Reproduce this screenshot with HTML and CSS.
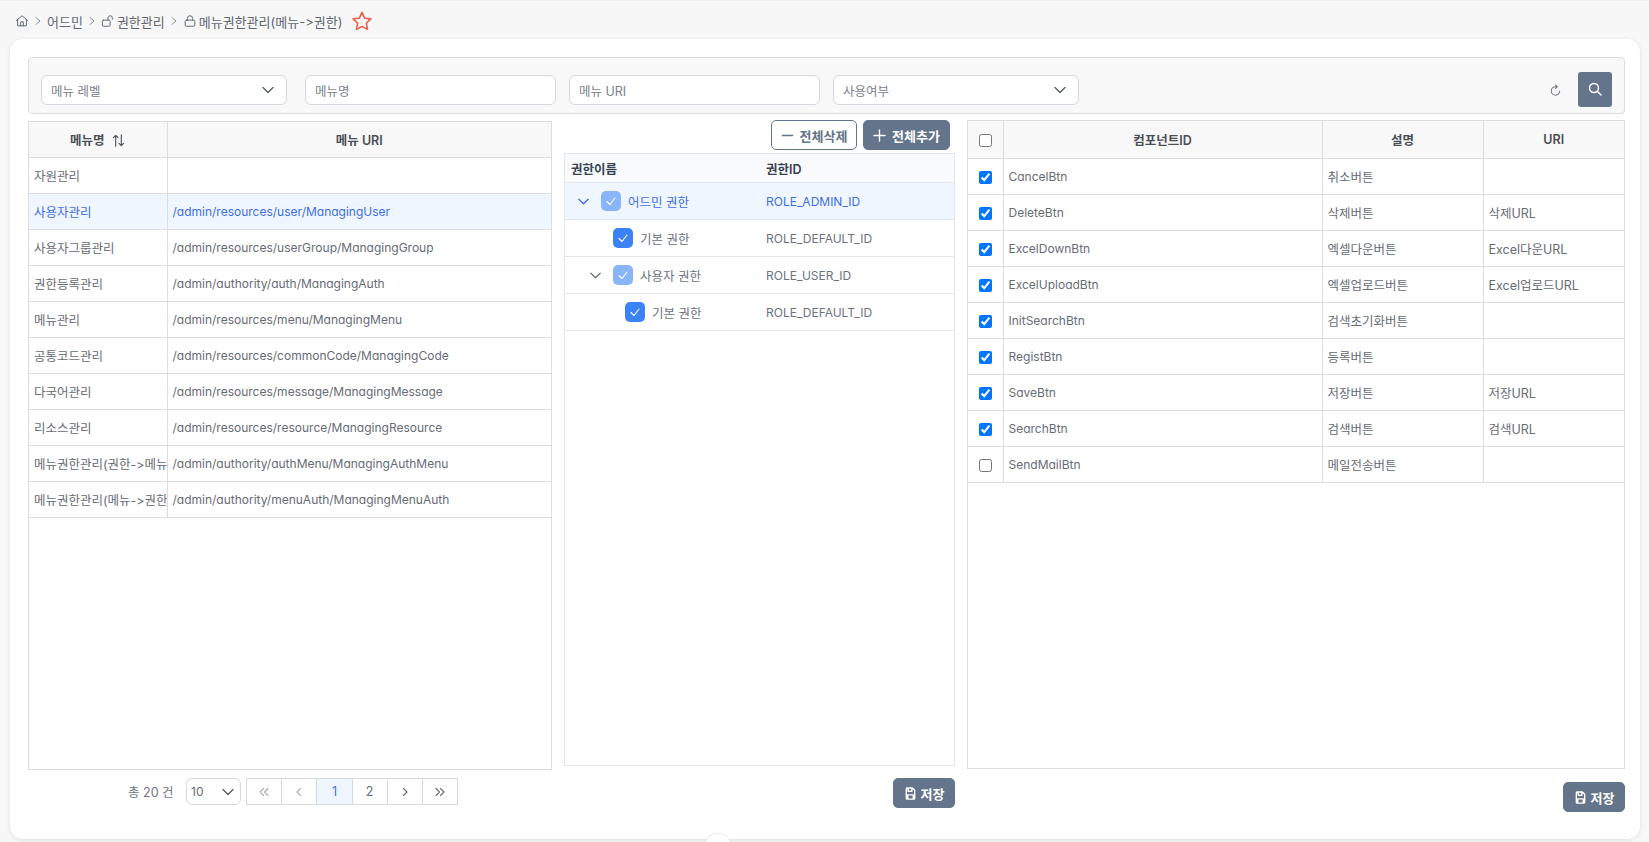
FILE: index.html
```html
<!DOCTYPE html>
<html lang="ko">
<head>
    <meta charset="UTF-8">
    <meta name="viewport" content="width=device-width, initial-scale=1.0">
    <title>메뉴권한관리(메뉴->권한)</title>
    <link rel="stylesheet" href="styles.css">
</head>
<body>
    <nav class="breadcrumb">
        <svg class="crumb-icon" viewBox="0 0 16 16"><path d="M1.5 7.5 8 2l6.5 5.5M3 6.5V13.5h10V6.5M6.5 13.5V9h3v4.5"/></svg>
        <svg class="crumb-sep" viewBox="0 0 10 10"><path d="M3 1.5 7 5 3 8.5"/></svg>
        <span>어드민</span>
        <svg class="crumb-sep" viewBox="0 0 10 10"><path d="M3 1.5 7 5 3 8.5"/></svg>
        <svg class="crumb-icon tight" viewBox="0 0 16 16"><rect x="1.5" y="7" width="9" height="7" rx="1.5"/><path d="M8 7V4.5a2.5 2.5 0 0 1 5 0V6"/></svg>
        <span>권한관리</span>
        <svg class="crumb-sep" viewBox="0 0 10 10"><path d="M3 1.5 7 5 3 8.5"/></svg>
        <svg class="crumb-icon tight lock" viewBox="0 0 16 16"><rect x="2.5" y="7" width="11" height="7" rx="1.5"/><path d="M5 7V5a3 3 0 0 1 6 0v2"/></svg>
        <span>메뉴권한관리(메뉴-&gt;권한)</span>
        <svg class="star" viewBox="0 0 24 24"><path d="M12 2.6 14.9 8.9 21.7 9.7 16.7 14.4 18 21.2 12 17.8 6 21.2 7.3 14.4 2.3 9.7 9.1 8.9Z"/></svg>
    </nav>

    <main class="card">
        <div class="search-bar">
            <div class="field select w-select first"><span>메뉴 레벨</span><svg class="chev" viewBox="0 0 14 14"><path d="M2 4.5 7 9.5l5-5"/></svg></div>
            <div class="field w-input"><span>메뉴명</span></div>
            <div class="field w-input"><span>메뉴 URI</span></div>
            <div class="field select w-select"><span>사용여부</span><svg class="chev" viewBox="0 0 14 14"><path d="M2 4.5 7 9.5l5-5"/></svg></div>
            <svg class="refresh" viewBox="0 0 16 16"><path d="M12.5 8.5A4.5 4.5 0 1 1 8 4h1.5M8 2l2 2-2 1.8"/></svg>
            <button class="search-btn"><svg viewBox="0 0 16 16"><circle cx="7" cy="7" r="4.5"/><path d="m10.5 10.5 3.5 3.5"/></svg></button>
        </div>

        <div class="columns">
            <section class="col-left">
                <div class="table-box left-box">
                    <table class="grid">
                        <colgroup><col class="c-name"><col></colgroup>
                        <thead>
                            <tr><th>메뉴명 <svg class="sort" viewBox="0 0 16 16"><path d="M5 14V2.5M2.5 5 5 2.5 7.5 5M11 2v11.5M8.5 11 11 13.5 13.5 11"/></svg></th><th>메뉴 URI</th></tr>
                        </thead>
                        <tbody>
                            <tr><td>자원관리</td><td></td></tr>
                            <tr class="selected"><td>사용자관리</td><td class="latin">/admin/resources/user/ManagingUser</td></tr>
                            <tr><td>사용자그룹관리</td><td class="latin">/admin/resources/userGroup/ManagingGroup</td></tr>
                            <tr><td>권한등록관리</td><td class="latin">/admin/authority/auth/ManagingAuth</td></tr>
                            <tr><td>메뉴관리</td><td class="latin">/admin/resources/menu/ManagingMenu</td></tr>
                            <tr><td>공통코드관리</td><td class="latin">/admin/resources/commonCode/ManagingCode</td></tr>
                            <tr><td>다국어관리</td><td class="latin">/admin/resources/message/ManagingMessage</td></tr>
                            <tr><td>리소스관리</td><td class="latin">/admin/resources/resource/ManagingResource</td></tr>
                            <tr><td>메뉴권한관리(권한-&gt;메뉴)</td><td class="latin">/admin/authority/authMenu/ManagingAuthMenu</td></tr>
                            <tr><td>메뉴권한관리(메뉴-&gt;권한)</td><td class="latin">/admin/authority/menuAuth/ManagingMenuAuth</td></tr>
                        </tbody>
                    </table>
                </div>
                <div class="pager-row">
                    <span class="total">총 20 건</span>
                    <div class="page-size"><span>10</span><svg class="chev" viewBox="0 0 14 14"><path d="M2 4.5 7 9.5l5-5"/></svg></div>
                    <div class="pager">
                        <span class="off"><svg viewBox="0 0 12 12"><path d="M5.5 2.5 2 6l3.5 3.5M10 2.5 6.5 6l3.5 3.5"/></svg></span>
                        <span class="off"><svg viewBox="0 0 12 12"><path d="M7.5 2.5 4 6l3.5 3.5"/></svg></span>
                        <span class="current">1</span>
                        <span>2</span>
                        <span><svg viewBox="0 0 12 12"><path d="M4.5 2.5 8 6 4.5 9.5"/></svg></span>
                        <span><svg viewBox="0 0 12 12"><path d="M2 2.5 5.5 6 2 9.5M6.5 2.5 10 6l-3.5 3.5"/></svg></span>
                    </div>
                </div>
            </section>

            <section class="col-mid">
                <div class="mid-actions">
                    <button class="btn btn-outline"><svg viewBox="0 0 14 14"><path d="M1.5 7h11"/></svg>전체삭제</button>
                    <button class="btn btn-solid"><svg viewBox="0 0 14 14"><path d="M1 7h12M7 1v12"/></svg>전체추가</button>
                </div>
                <div class="tree">
                    <div class="tree-head"><div class="t-name">권한이름</div><div>권한ID</div></div>
                    <div class="tree-row selected">
                        <div class="t-name lvl-0">
                            <svg class="tree-chev" viewBox="0 0 14 14"><path d="M2 4.5 7 9.5l5-5"/></svg>
                            <span class="tick partial"><svg viewBox="0 0 14 14"><path d="M3 7.5 6 10.5 11 4"/></svg></span>어드민 권한
                        </div>
                        <div class="latin">ROLE_ADMIN_ID</div>
                    </div>
                    <div class="tree-row">
                        <div class="t-name lvl-1">
                            <span class="tick"><svg viewBox="0 0 14 14"><path d="M3 7.5 6 10.5 11 4"/></svg></span>기본 권한
                        </div>
                        <div class="latin">ROLE_DEFAULT_ID</div>
                    </div>
                    <div class="tree-row">
                        <div class="t-name lvl-1b">
                            <svg class="tree-chev" viewBox="0 0 14 14"><path d="M2 4.5 7 9.5l5-5"/></svg>
                            <span class="tick partial"><svg viewBox="0 0 14 14"><path d="M3 7.5 6 10.5 11 4"/></svg></span>사용자 권한
                        </div>
                        <div class="latin">ROLE_USER_ID</div>
                    </div>
                    <div class="tree-row">
                        <div class="t-name lvl-2">
                            <span class="tick"><svg viewBox="0 0 14 14"><path d="M3 7.5 6 10.5 11 4"/></svg></span>기본 권한
                        </div>
                        <div class="latin">ROLE_DEFAULT_ID</div>
                    </div>
                </div>
                <div class="save-row mid-save">
                    <button class="btn btn-solid btn-save"><svg viewBox="0 0 14 14"><path d="M3 1h6l2.5 2.5V12a1 1 0 0 1-1 1h-7a1 1 0 0 1-1-1V2a1 1 0 0 1 1-1ZM4.5 1v3.5h4V1M4 13V8.5h6V13"/></svg>저장</button>
                </div>
            </section>

            <section class="col-right">
                <div class="table-box right-box">
                    <table class="grid">
                        <colgroup><col class="c-check"><col><col class="c-desc"><col class="c-uri"></colgroup>
                        <thead>
                            <tr class="tall"><th><input type="checkbox"></th><th>컴포넌트ID</th><th>설명</th><th>URI</th></tr>
                        </thead>
                        <tbody>
                            <tr><td class="check"><input type="checkbox" checked></td><td class="latin">CancelBtn</td><td>취소버튼</td><td></td></tr>
                            <tr><td class="check"><input type="checkbox" checked></td><td class="latin">DeleteBtn</td><td>삭제버튼</td><td>삭제URL</td></tr>
                            <tr><td class="check"><input type="checkbox" checked></td><td class="latin">ExcelDownBtn</td><td>엑셀다운버튼</td><td>Excel다운URL</td></tr>
                            <tr><td class="check"><input type="checkbox" checked></td><td class="latin">ExcelUploadBtn</td><td>엑셀업로드버튼</td><td>Excel업로드URL</td></tr>
                            <tr><td class="check"><input type="checkbox" checked></td><td class="latin">InitSearchBtn</td><td>검색초기화버튼</td><td></td></tr>
                            <tr><td class="check"><input type="checkbox" checked></td><td class="latin">RegistBtn</td><td>등록버튼</td><td></td></tr>
                            <tr><td class="check"><input type="checkbox" checked></td><td class="latin">SaveBtn</td><td>저장버튼</td><td>저장URL</td></tr>
                            <tr><td class="check"><input type="checkbox" checked></td><td class="latin">SearchBtn</td><td>검색버튼</td><td>검색URL</td></tr>
                            <tr><td class="check"><input type="checkbox"></td><td class="latin">SendMailBtn</td><td>메일전송버튼</td><td></td></tr>
                        </tbody>
                    </table>
                </div>
                <div class="save-row right-save">
                    <button class="btn btn-solid btn-save"><svg viewBox="0 0 14 14"><path d="M3 1h6l2.5 2.5V12a1 1 0 0 1-1 1h-7a1 1 0 0 1-1-1V2a1 1 0 0 1 1-1ZM4.5 1v3.5h4V1M4 13V8.5h6V13"/></svg>저장</button>
                </div>
            </section>
        </div>
        <div class="collapse-tab"></div>
    </main>
</body>
</html>
```

FILE: styles.css
```css
* {
    box-sizing: border-box;
}
html, body {
    height: 100%;
}
body {
    margin: 0;
    background-color: #f7f7f7;
    color: #666c76;
    font-family: Inter, "Noto Sans CJK KR", sans-serif;
    font-size: 12.5px;
    overflow: hidden;
}
svg {
    fill: none;
    stroke: currentColor;
    stroke-linecap: round;
    stroke-linejoin: round;
}
.latin {
    font-size: 12px;
}

/* breadcrumb */
.breadcrumb {
    height: 39px;
    padding: 2px 0 0 15px;
    display: flex;
    align-items: center;
    color: #5f6672;
    font-size: 13px;
    border-top: 1px solid #eeeeee;
}
.crumb-icon {
    width: 14px;
    height: 14px;
    stroke-width: 1.1;
}
.crumb-icon.tight {
    margin-right: 2px;
}
.crumb-sep {
    width: 10px;
    height: 10px;
    margin: 0 4px;
    color: #8a8f98;
    stroke-width: 1;
}
.star {
    width: 22px;
    height: 22px;
    margin-left: 9px;
    color: #ef5b43;
    stroke-width: 1.7;
}

/* card */
.card {
    position: relative;
    height: 800px;
    margin: 0 9px 0 10px;
    padding: 18px 15px 0 18px;
    background-color: #fff;
    border-radius: 13px;
    box-shadow: 0 1px 4px rgba(0, 0, 0, 0.1);
}
.search-bar {
    height: 57px;
    display: flex;
    align-items: center;
    padding: 9px 12px 0;
    background-color: #f8f8f8;
    border: 1px solid #dddddd;
    border-radius: 4px;
}
.field {
    height: 30px;
    margin-right: 13px;
    padding: 0 9px;
    display: flex;
    align-items: center;
    justify-content: space-between;
    background-color: #fff;
    border: 1px solid #d5d8de;
    border-radius: 6px;
    color: #7b818b;
}
.w-select {
    width: 246px;
}
.w-select.first {
    margin-right: 18px;
}
.w-input {
    width: 251px;
}
.w-input + .w-select {
    margin-right: auto;
}
.chev {
    width: 14px;
    height: 14px;
    margin-right: 2px;
    color: #555b66;
    stroke-width: 1.3;
}
.refresh {
    width: 15px;
    height: 15px;
    color: #70767f;
    stroke-width: 1.1;
    margin-right: 15px;
}
.search-btn {
    width: 34px;
    height: 35px;
    margin-top: -2px;
    padding: 0;
    border: none;
    border-radius: 3px;
    background-color: #64748b;
    color: #fff;
    display: flex;
    align-items: center;
    justify-content: center;
}
.search-btn svg {
    width: 16px;
    height: 16px;
    stroke-width: 1.5;
}

/* three columns */
.columns {
    display: flex;
}
.col-left {
    width: 524px;
    margin-top: 7px;
}
.col-mid {
    width: 391px;
    margin-left: 12px;
    margin-top: 6px;
}
.col-right {
    width: 658px;
    margin-left: 12px;
    margin-top: 6px;
}
.table-box {
    border: 1px solid #dddddd;
}
.left-box {
    height: 649px;
}
.right-box {
    height: 649px;
}
.grid {
    width: 100%;
    border-collapse: collapse;
    table-layout: fixed;
    font-feature-settings: "cv11";
}
.grid th,
.grid td {
    height: 36px;
    padding: 0 5px;
    border: 1px solid #dddddd;
    white-space: nowrap;
    overflow: hidden;
}
.grid tr > :first-child {
    border-left: none;
}
.grid tr > :last-child {
    border-right: none;
}
.grid thead tr > * {
    border-top: none;
    height: 35px;
}
.grid th {
    background-color: #f8f8f8;
    color: #4a4f57;
    font-weight: 600;
    text-align: center;
}
.grid .tall th {
    height: 37px;
}
.grid tr.selected td {
    background-color: #eff6ff;
    color: #3f6fe0;
}
.c-name {
    width: 138px;
}
.c-check {
    width: 35px;
}
.c-desc {
    width: 161px;
}
.c-uri {
    width: 141px;
}
.check {
    text-align: center;
}
.grid input {
    width: 13px;
    height: 13px;
    margin: 0;
    vertical-align: middle;
    accent-color: #0075ff;
}
.sort {
    width: 15px;
    height: 15px;
    margin-left: 3px;
    vertical-align: -3px;
    stroke-width: 1.2;
}

/* pager */
.pager-row {
    display: flex;
    align-items: center;
    margin-top: 8px;
    padding-left: 100px;
}
.total {
    width: 58px;
    color: #70767f;
}
.page-size {
    width: 55px;
    height: 27px;
    margin-right: 6px;
    padding: 0 3px 0 4px;
    display: flex;
    align-items: center;
    justify-content: space-between;
    border: 1px solid #d5d8de;
    border-radius: 6px;
    font-size: 12px;
}
.pager {
    display: flex;
}
.pager span {
    width: 36.2px;
    height: 27px;
    margin-left: -1px;
    display: flex;
    align-items: center;
    justify-content: center;
    border: 1px solid #d5d8de;
}
.pager svg {
    width: 12px;
    height: 12px;
    stroke-width: 1.1;
}
.pager .off {
    color: #a8adb5;
}
.pager .current {
    background-color: #eff6ff;
    color: #3f6fe0;
}

/* tree */
.mid-actions {
    height: 33px;
    display: flex;
    justify-content: flex-end;
    gap: 6px;
    padding-right: 5px;
}
.btn {
    height: 30px;
    padding: 0;
    display: inline-flex;
    align-items: center;
    justify-content: center;
    gap: 6px;
    border-radius: 5px;
    font-family: inherit;
    font-size: 13px;
    font-weight: 700;
}
.btn svg {
    width: 13px;
    height: 13px;
    stroke-width: 1.5;
}
.btn-outline {
    width: 86px;
    background-color: #fff;
    border: 1px solid #64748b;
    color: #64748b;
}
.btn-solid {
    width: 87px;
    background-color: #64748b;
    border: 1px solid #64748b;
    color: #fff;
}
.tree {
    height: 613px;
    border: 1px solid #e2e5ea;
}
.tree-head,
.tree-row {
    display: flex;
    align-items: center;
    border-bottom: 1px solid #e2e5ea;
}
.tree-head {
    height: 29px;
    background-color: #f8fafc;
    color: #374151;
    font-weight: 600;
}
.tree-row {
    height: 37px;
    color: #6b7280;
}
.tree-row.selected {
    background-color: #eff6ff;
    color: #3f6fe0;
}
.t-name {
    width: 201px;
    padding-left: 6px;
    display: flex;
    align-items: center;
    flex-shrink: 0;
}
.lvl-0 {
    padding-left: 12px;
}
.lvl-1 {
    padding-left: 48px;
}
.lvl-1b {
    padding-left: 24px;
}
.lvl-2 {
    padding-left: 60px;
}
.tree-chev {
    width: 13px;
    height: 13px;
    margin-right: 11px;
    stroke-width: 1.4;
}
.tick {
    width: 20px;
    height: 20px;
    margin-right: 7px;
    display: flex;
    align-items: center;
    justify-content: center;
    border-radius: 5px;
    background-color: #3b82f6;
    color: #fff;
}
.tick.partial {
    background-color: #89b5fb;
}
.tick svg {
    width: 14px;
    height: 14px;
    stroke-width: 1.1;
}
.save-row {
    display: flex;
    justify-content: flex-end;
}
.mid-save {
    margin-top: 12px;
}
.right-save {
    margin-top: 13px;
}
.btn-save {
    width: 62px;
    height: 30px;
    gap: 4px;
}

/* small tab at bottom edge */
.collapse-tab {
    position: absolute;
    left: 695px;
    bottom: -8px;
    width: 26px;
    height: 13px;
    background-color: #fff;
    border-radius: 13px 13px 0 0;
    box-shadow: 0 -1px 2px rgba(0, 0, 0, 0.1);
}
```
